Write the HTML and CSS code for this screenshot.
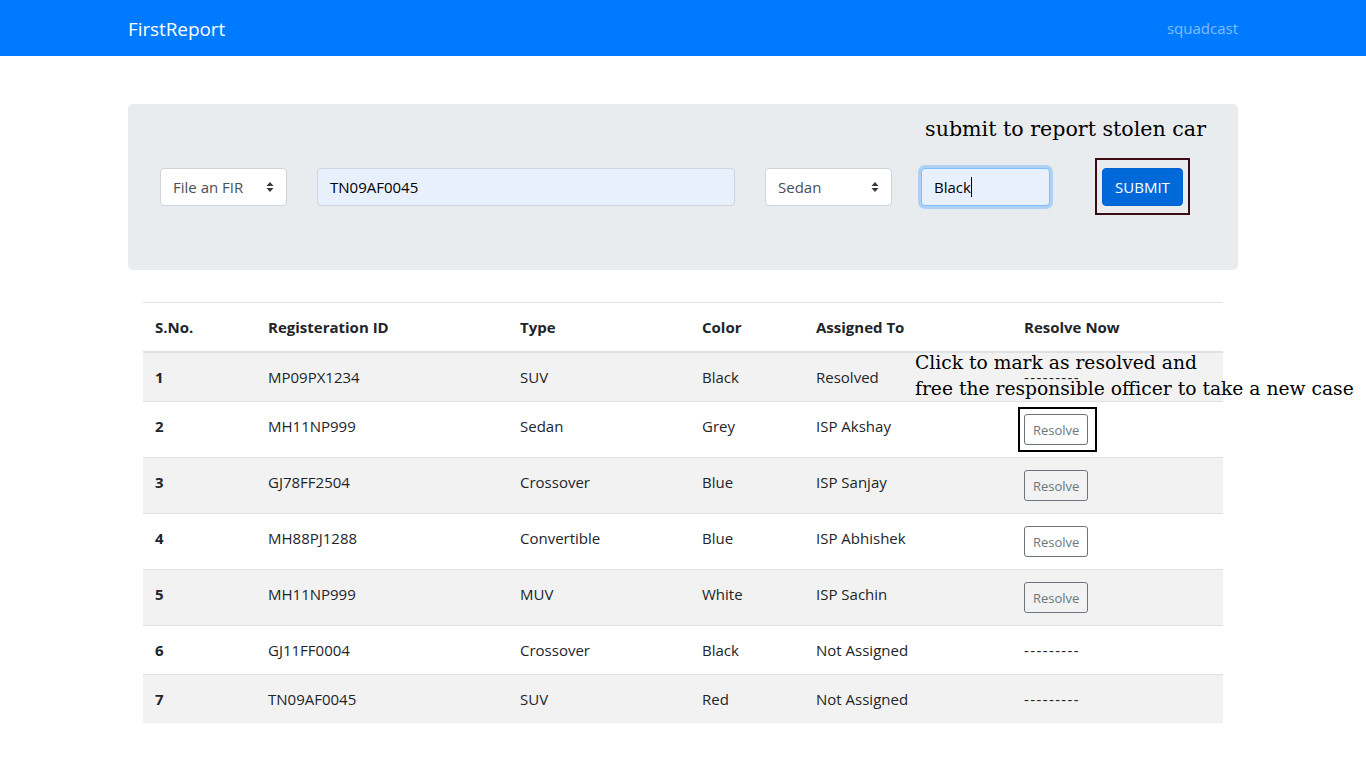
FILE: index.html
```html
<!DOCTYPE html>
<html lang="en">
<head>
<meta charset="utf-8">
<title>FirstReport</title>
<link rel="stylesheet" href="styles.css">
</head>
<body>
<nav class="navbar">
  <div class="container nav-inner">
    <a class="brand">FirstReport</a>
    <a class="nav-link">squadcast</a>
  </div>
</nav>

<main class="container">
  <section class="jumbotron">
    <p class="note-submit">submit to report stolen car</p>
    <div class="form-row">
      <div class="select w-fir">
        <span>File an FIR</span>
        <svg class="caret" width="8" height="12" viewBox="0 0 8 12"><path d="M4 1 L7.5 5 H0.5 Z M4 11 L0.5 7 H7.5 Z" fill="#343a40"/></svg>
      </div>
      <div class="input w-reg autofill">TN09AF0045</div>
      <div class="select w-type">
        <span>Sedan</span>
        <svg class="caret" width="8" height="12" viewBox="0 0 8 12"><path d="M4 1 L7.5 5 H0.5 Z M4 11 L0.5 7 H7.5 Z" fill="#343a40"/></svg>
      </div>
      <div class="input w-color autofill focus">Black<span class="cursor"></span></div>
      <div class="submit-box"><button class="btn-submit">SUBMIT</button></div>
    </div>
  </section>

  <div class="table-wrap">
    <table class="table">
      <colgroup>
        <col class="c1"><col class="c2"><col class="c3"><col class="c4"><col class="c5"><col class="c6">
      </colgroup>
      <thead>
        <tr><th>S.No.</th><th>Registeration ID</th><th>Type</th><th>Color</th><th>Assigned To</th><th>Resolve Now</th></tr>
      </thead>
      <tbody>
        <tr class="odd"><th>1</th><td>MP09PX1234</td><td>SUV</td><td>Black</td><td>Resolved</td><td class="dash">---------</td></tr>
        <tr><th>2</th><td>MH11NP999</td><td>Sedan</td><td>Grey</td><td>ISP Akshay</td><td><span class="btn-wrap"><button class="btn-resolve">Resolve</button><span class="mark-box"></span></span></td></tr>
        <tr class="odd"><th>3</th><td>GJ78FF2504</td><td>Crossover</td><td>Blue</td><td>ISP Sanjay</td><td><button class="btn-resolve">Resolve</button></td></tr>
        <tr><th>4</th><td>MH88PJ1288</td><td>Convertible</td><td>Blue</td><td>ISP Abhishek</td><td><button class="btn-resolve">Resolve</button></td></tr>
        <tr class="odd"><th>5</th><td>MH11NP999</td><td>MUV</td><td>White</td><td>ISP Sachin</td><td><button class="btn-resolve">Resolve</button></td></tr>
        <tr><th>6</th><td>GJ11FF0004</td><td>Crossover</td><td>Black</td><td>Not Assigned</td><td class="dash">---------</td></tr>
        <tr class="odd"><th>7</th><td>TN09AF0045</td><td>SUV</td><td>Red</td><td>Not Assigned</td><td class="dash">---------</td></tr>
      </tbody>
    </table>
    <p class="note-resolve">Click to mark as resolved and<br>free the responsible officer to take a new case</p>
  </div>
</main>
</body>
</html>
```
FILE: styles.css
```css
* { box-sizing: border-box; }
html, body { margin: 0; padding: 0; }
body {
  font-family: "Open Sans", "Noto Sans", sans-serif;
  font-size: 15px;
  line-height: 24px;
  color: #212529;
  background: #fff;
}
.container {
  width: 1140px;
  margin: 0 auto;
  padding: 0 15px;
}
.navbar {
  background: #007bff;
  height: 56px;
}
.nav-inner {
  display: flex;
  justify-content: space-between;
  align-items: center;
  height: 56px;
}
.brand {
  color: #fff;
  font-size: 19px;
  line-height: 30px;
  padding-top: 1px;
  letter-spacing: -0.1px;
}
.nav-link {
  color: rgba(255, 255, 255, 0.5);
  font-size: 15px;
}
.jumbotron {
  margin-top: 48px;
  background: #e9ecef;
  border-radius: 5px;
  padding: 10px 32px 64px;
}
.note-submit {
  margin: 0 0 24px;
  text-align: right;
  font-family: "DejaVu Serif", "Liberation Serif", serif;
  font-size: 20.6px;
  line-height: 30px;
  color: #000;
}
.form-row {
  display: flex;
  align-items: flex-start;
  height: 38px;
}
.select, .input {
  height: 38px;
  border: 1px solid #ced4da;
  border-radius: 4px;
  background: #fff;
  padding: 6px 12px;
  color: #495057;
  display: flex;
  align-items: center;
}
.select { justify-content: space-between; }
.w-fir { width: 127px; }
.w-reg { width: 418px; margin-left: 30px; }
.w-type { width: 127px; margin-left: 30px; }
.w-color { width: 129px; margin-left: 29px; }
.autofill { background: #e8f0fe; color: #000; }
.focus {
  border-color: #80bdff;
  box-shadow: 0 0 0 3px rgba(0, 123, 255, 0.25);
}
.cursor {
  display: inline-block;
  width: 1px;
  height: 20px;
  background: #000;
}
.submit-box {
  margin: -10px 0 -9px 45px;
  border: 2px solid #3b0c12;
  padding: 8px 5px 7px;
}
.btn-submit {
  display: block;
  width: 81px;
  height: 38px;
  border: 1px solid #0062cc;
  border-radius: 4px;
  background: #0069d9;
  color: #fff;
  font-family: inherit;
  font-size: 15px;
  padding: 0;
}
.table-wrap {
  position: relative;
  margin-top: 32px;
  padding: 0 15px;
}
.table {
  width: 1080px;
  border-collapse: collapse;
  table-layout: fixed;
}
.c1 { width: 113px; }
.c2 { width: 252px; }
.c3 { width: 182px; }
.c4 { width: 114px; }
.c5 { width: 208px; }
.c6 { width: 211px; }
.table th, .table td {
  text-align: left;
  padding: 12px;
  border-top: 1px solid #dee2e6;
  vertical-align: top;
}
.table thead th {
  border-bottom: 2px solid #dee2e6;
  font-weight: 700;
  vertical-align: bottom;
}
.table tbody th { font-weight: 700; }
.table tr.odd { background: #f2f2f2; }
.dash { letter-spacing: 1.4px; }
.btn-wrap { position: relative; display: inline-block; vertical-align: top; }
.btn-resolve {
  display: inline-block;
  vertical-align: top;
  height: 31px;
  padding: 0 8px;
  border: 1px solid #6c757d;
  border-radius: 3px;
  background: transparent;
  color: #6c757d;
  font-family: inherit;
  font-size: 13px;
}
.mark-box {
  position: absolute;
  left: -6px;
  top: -7px;
  right: -9px;
  bottom: -7px;
  border: 2px solid #000;
}
.note-resolve {
  position: absolute;
  left: 787px;
  top: 48px;
  margin: 0;
  font-family: "DejaVu Serif", "Liberation Serif", serif;
  font-size: 18.7px;
  line-height: 26px;
  color: #000;
  white-space: nowrap;
}
```
